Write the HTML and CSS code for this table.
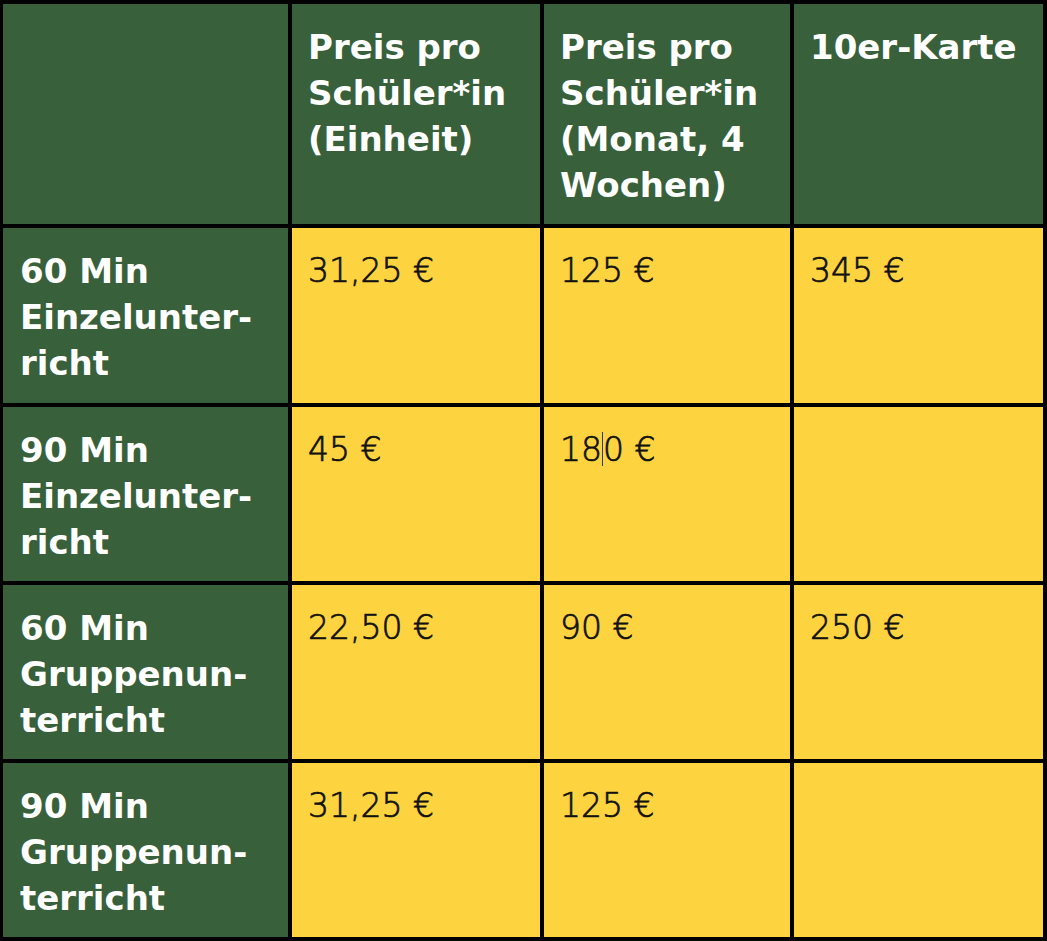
FILE: index.html
```html
<!DOCTYPE html>
<html lang="de">
<head>
<meta charset="utf-8">
<title>Preise</title>
<link rel="stylesheet" href="styles.css">
</head>
<body>
<div class="price-table">
  <div class="cell head"></div>
  <div class="cell head">Preis pro Schüler*in (Einheit)</div>
  <div class="cell head">Preis pro Schüler*in (Monat, 4 Wochen)</div>
  <div class="cell head">10er-Karte</div>

  <div class="cell rowhead">60 Min Einzelunter-<br>richt</div>
  <div class="cell val">31,25 €</div>
  <div class="cell val">125 €</div>
  <div class="cell val">345 €</div>

  <div class="cell rowhead">90 Min Einzelunter-<br>richt</div>
  <div class="cell val">45 €</div>
  <div class="cell val">18<span class="caret"></span>0 €</div>
  <div class="cell val"></div>

  <div class="cell rowhead">60 Min Gruppenun-<br>terricht</div>
  <div class="cell val">22,50 €</div>
  <div class="cell val">90 €</div>
  <div class="cell val">250 €</div>

  <div class="cell rowhead">90 Min Gruppenun-<br>terricht</div>
  <div class="cell val">31,25 €</div>
  <div class="cell val">125 €</div>
  <div class="cell val"></div>
</div>
</body>
</html>
```
FILE: styles.css
```css
html, body {
  margin: 0;
  padding: 0;
  background: #000;
}
.price-table {
  display: grid;
  grid-template-columns: 285px 248px 246px 249px;
  grid-template-rows: 220px 175px 174px 174px 174px;
  gap: 4px;
  padding: 4px 4px 4px 3px;
  width: 1047px;
  height: 941px;
  box-sizing: border-box;
  background: #000;
  font-family: "DejaVu Sans", sans-serif;
}
.cell {
  padding: 20px 16px 0 17px;
  font-size: 33px;
  line-height: 46px;
  box-sizing: border-box;
}
.head, .rowhead {
  background: #38603a;
  color: #fff;
  font-weight: bold;
  font-size: 34px;
}
.head {
  padding-left: 16px;
}
.val {
  background: #fdd33f;
  color: #111;
  font-weight: 300;
  -webkit-text-stroke: 0.7px #111;
  padding-top: 20px;
  padding-left: 16px;
}
.rowhead {
  padding-top: 20px;
}
.caret {
  display: inline-block;
  width: 1px;
  height: 34px;
  background: #2a3b8f;
  vertical-align: -5px;
}
```
